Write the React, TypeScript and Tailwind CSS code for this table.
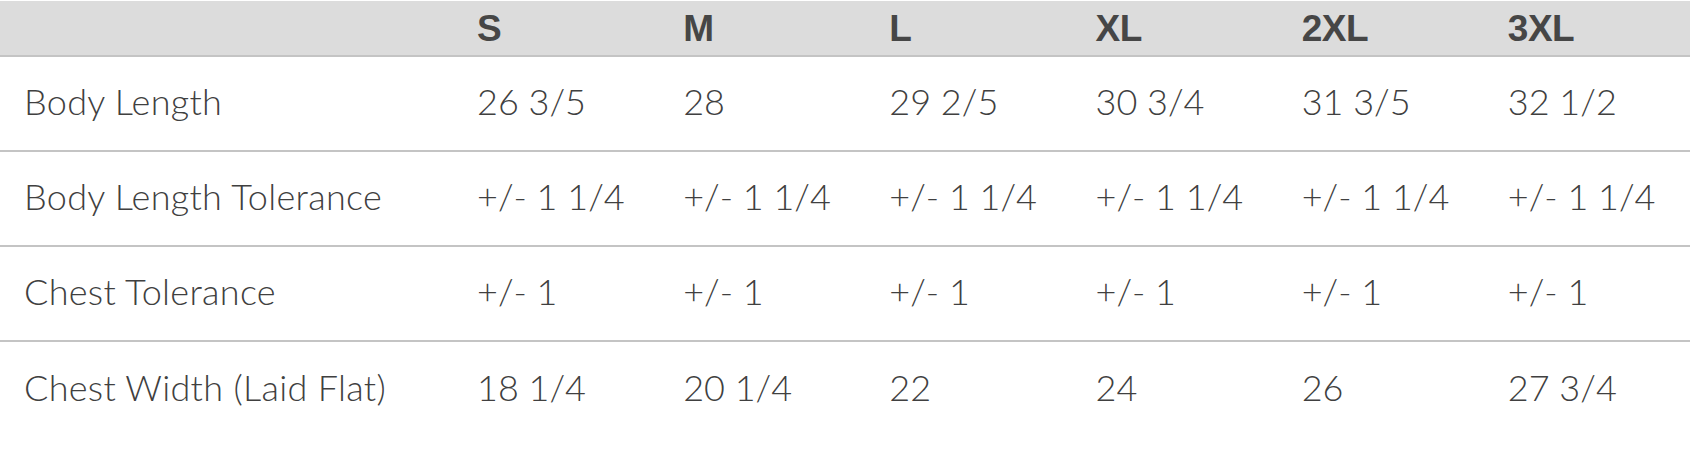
const sizes = ["S", "M", "L", "XL", "2XL", "3XL"];

const rows: { label: string; values: string[] }[] = [
  { label: "Body Length", values: ["26 3/5", "28", "29 2/5", "30 3/4", "31 3/5", "32 1/2"] },
  { label: "Body Length Tolerance", values: ["+/- 1 1/4", "+/- 1 1/4", "+/- 1 1/4", "+/- 1 1/4", "+/- 1 1/4", "+/- 1 1/4"] },
  { label: "Chest Tolerance", values: ["+/- 1", "+/- 1", "+/- 1", "+/- 1", "+/- 1", "+/- 1"] },
  { label: "Chest Width (Laid Flat)", values: ["18 1/4", "20 1/4", "22", "24", "26", "27 3/4"] },
];

export default function App() {
  return (
    <div className="w-[1690px] h-[460px] bg-white pt-px">
      {/* header */}
      <div className="grid grid-cols-[453px_repeat(6,1fr)] h-[56px] items-center bg-[#dcdcdc] border-b-2 border-[#c4c4c4] font-['Liberation_Sans',Arial,sans-serif] font-bold text-[37px] text-[#464646]">
        <div />
        {sizes.map((s) => (
          <div key={s} className="pl-6 leading-none tracking-[-0.5px]">
            {s}
          </div>
        ))}
      </div>

      {rows.map((r, i) => (
        <div
          key={r.label}
          className={`grid grid-cols-[453px_repeat(6,1fr)] h-[95px] items-center font-['Lato',sans-serif] font-light text-[36px] text-[#404040] ${
            i < rows.length - 1 ? "border-b-2 border-[#c4c4c4]" : ""
          }`}
        >
          <div className="pl-6 leading-none pb-[5px] tracking-[0.3px]">{r.label}</div>
          {r.values.map((v, j) => (
            <div key={j} className="pl-6 leading-none pb-[5px] whitespace-nowrap">
              {v}
            </div>
          ))}
        </div>
      ))}
    </div>
  );
}
